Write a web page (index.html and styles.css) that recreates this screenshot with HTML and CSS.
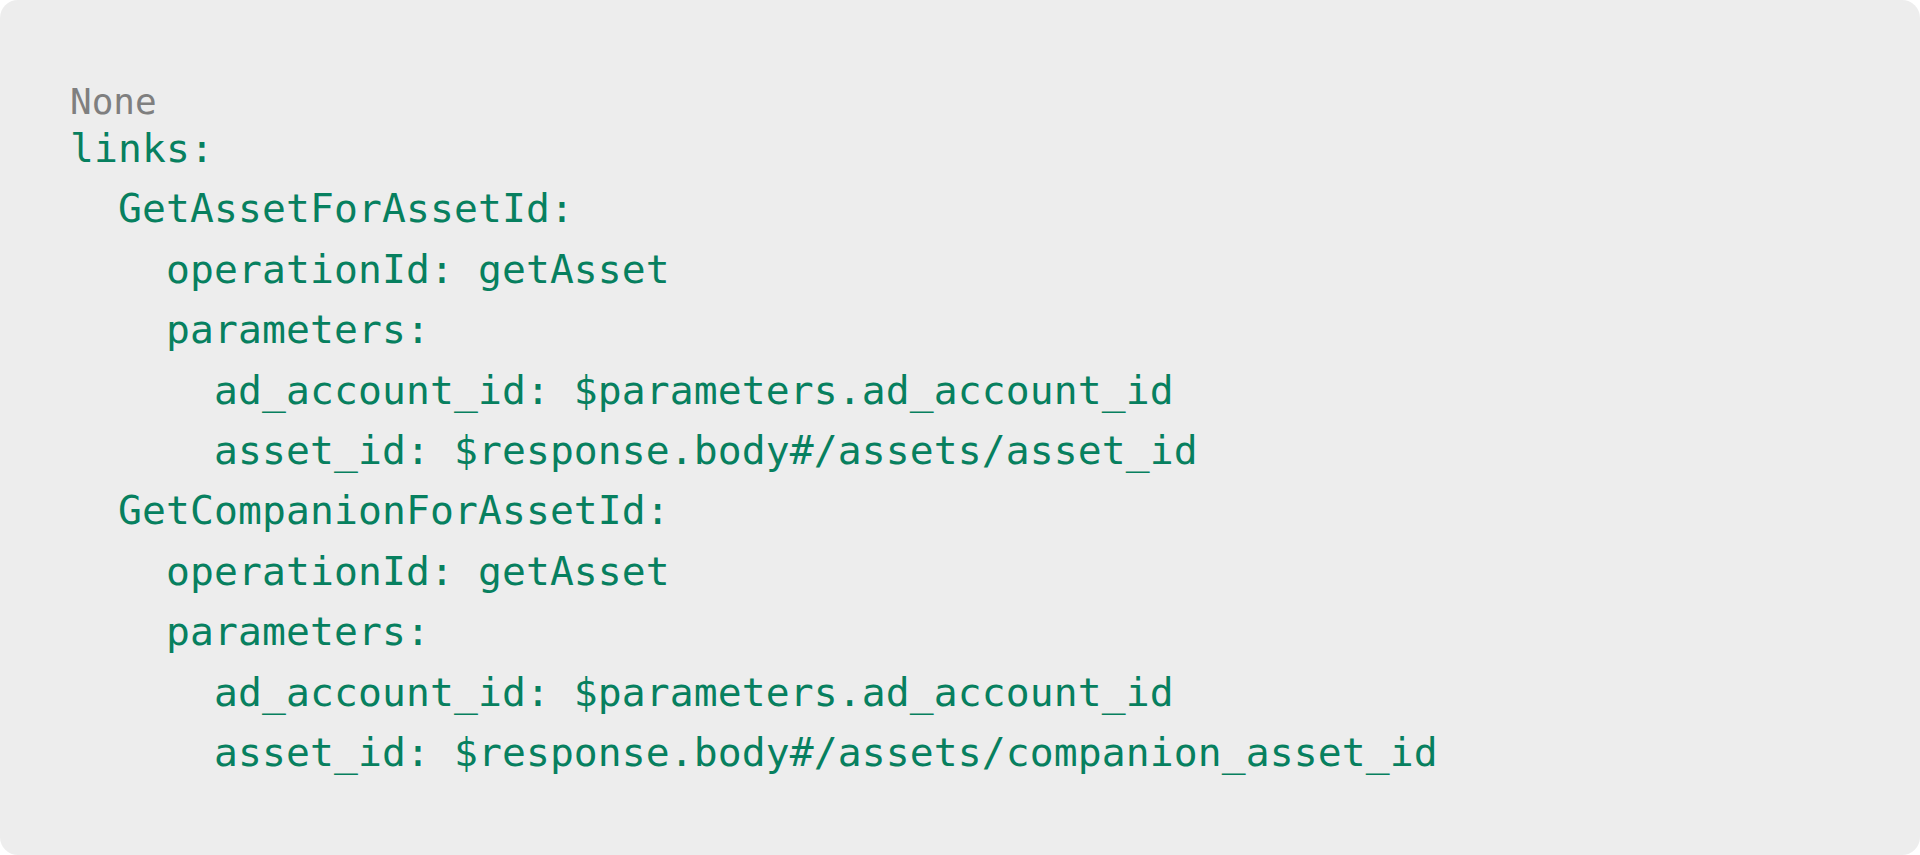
FILE: index.html
```html
<!DOCTYPE html>
<html lang="en">
<head>
<meta charset="utf-8">
<title>Links</title>
<link rel="stylesheet" href="styles.css">
</head>
<body>
<div class="card">
  <div class="lang">None</div>
<pre class="code">links:
  GetAssetForAssetId:
    operationId: getAsset
    parameters:
      ad_account_id: $parameters.ad_account_id
      asset_id: $response.body#/assets/asset_id
  GetCompanionForAssetId:
    operationId: getAsset
    parameters:
      ad_account_id: $parameters.ad_account_id
      asset_id: $response.body#/assets/companion_asset_id</pre>
</div>
</body>
</html>
```

FILE: styles.css
```css
html, body {
  margin: 0;
  padding: 0;
  background: #ffffff;
}

.card {
  box-sizing: border-box;
  width: 1920px;
  height: 855px;
  background: #ededed;
  border-radius: 18px;
  padding: 85px 70px 0;
  font-family: "DejaVu Sans Mono", "Liberation Mono", monospace;
}

.lang {
  font-size: 36px;
  line-height: 33px;
  color: #7f7f7f;
}

.code {
  margin: 0;
  font-family: inherit;
  font-size: 39.7px;
  letter-spacing: 0.1px;
  line-height: 60.4px;
  color: #07805f;
  white-space: pre;
}
```
